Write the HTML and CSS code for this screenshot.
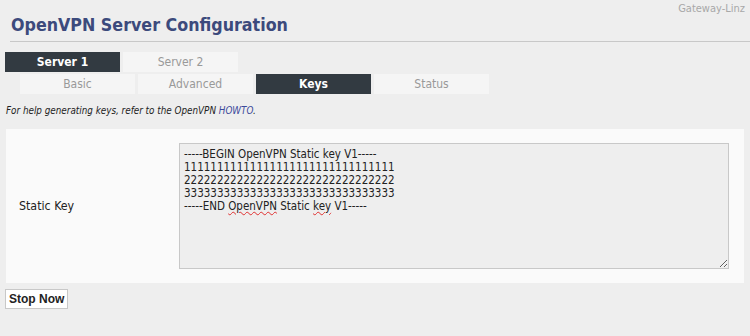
FILE: index.html
```html
<!DOCTYPE html>
<html lang="en">
<head>
    <meta charset="UTF-8">
    <meta name="viewport" content="width=device-width, initial-scale=1.0">
    <title>OpenVPN Server Configuration</title>
    <link rel="stylesheet" href="styles.css">
</head>
<body>
    <div class="hostname">Gateway-Linz</div>
    <h1 class="header">OpenVPN Server Configuration</h1>

    <div class="tabs servers">
        <a class="tab active">Server 1</a>
        <a class="tab">Server 2</a>
    </div>
    <div class="tabs subtabs">
        <a class="tab">Basic</a>
        <a class="tab">Advanced</a>
        <a class="tab active">Keys</a>
        <a class="tab">Status</a>
    </div>

    <p class="help">For help generating keys, refer to the OpenVPN <a href="#">HOWTO</a>.</p>

    <div class="panel">
        <div class="row">
            <label class="field-label">Static Key</label>
            <div class="keybox" role="textbox">-----BEGIN OpenVPN Static key V1-----
11111111111111111111111111111111
22222222222222222222222222222222
33333333333333333333333333333333
-----END <span class="typo">OpenVPN</span> Static <span class="typo">key</span> V1-----</div>
        </div>
    </div>

    <button class="stop">Stop Now</button>
</body>
</html>
```

FILE: styles.css
```css
body {
    font-family: "DejaVu Sans Condensed", "DejaVu Sans", sans-serif;
    font-stretch: condensed;
    background-color: #eeeeee;
    margin: 0;
    padding: 0;
    color: #222;
}

.hostname {
    text-align: right;
    font-size: 11px;
    color: #a8a8a8;
    padding: 2px 5px 0 0;
    height: 13px;
}

h1.header {
    font-size: 17.7px;
    color: #3c4a7c;
    margin: 0 0 0 10px;
    padding: 0 0 5px 1px;
    height: 21px;
    border-bottom: 1px solid #c8c8c8;
}

.tabs {
    display: flex;
    gap: 3px;
}

.servers {
    margin: 10px 0 0 5px;
}

.subtabs {
    margin: 2px 0 0 20px;
}

.tab {
    width: 115px;
    height: 20px;
    line-height: 20px;
    text-align: center;
    font-size: 12px;
    background-color: #f5f5f5;
    color: #999;
}

.tab.active {
    background-color: #323a41;
    color: #fff;
    font-weight: bold;
}

p.help {
    font-size: 9.8px;
    font-style: italic;
    margin: 0;
    padding: 11px 0 0 6px;
    height: 24px;
    color: #222;
}

p.help a {
    color: #3c4a9c;
    text-decoration: none;
}

.panel {
    background-color: #fafafa;
    margin: 0 6px;
    padding: 14px 0 14px 0;
}

.row {
    display: flex;
    align-items: center;
}

.field-label {
    width: 160px;
    padding-left: 13px;
    font-size: 12.3px;
}

.keybox {
    box-sizing: border-box;
    width: 550px;
    height: 126px;
    background-color: #eeeeee;
    border: 1px solid #c8c8c8;
    padding: 4px 4px;
    font-size: 11.5px;
    line-height: 13px;
    white-space: pre;
    overflow: auto;
    resize: both;
    color: #222;
}

.typo {
    text-decoration: underline wavy #e03030;
    text-decoration-thickness: 1px;
    text-underline-offset: 1px;
}

button.stop {
    margin: 6px 0 0 5px;
    height: 20px;
    padding: 0 3px;
    background-color: #fff;
    border: 1px solid #c8c8c8;
    font-family: "Liberation Sans", Arial, sans-serif;
    font-weight: bold;
    font-size: 12px;
    color: #222;
}
```
